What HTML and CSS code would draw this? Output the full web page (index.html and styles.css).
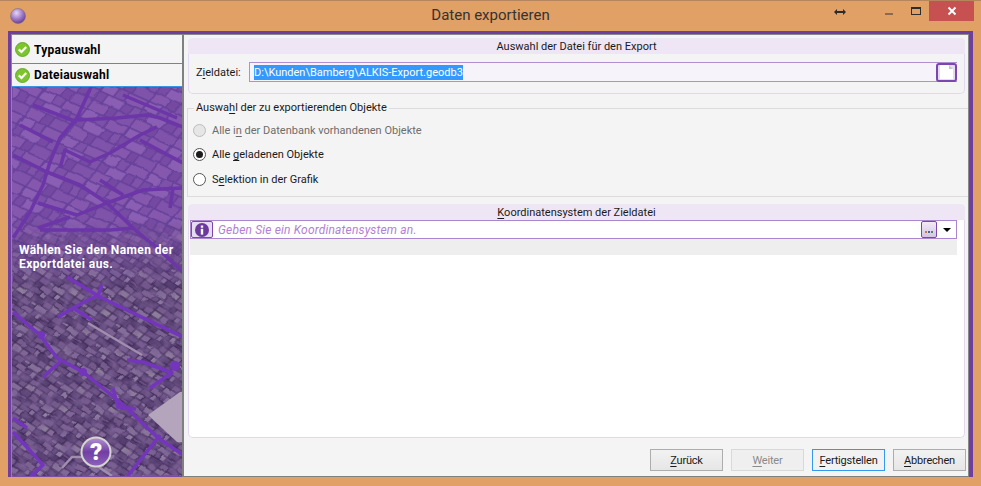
FILE: index.html
```html
<!DOCTYPE html>
<html lang="de">
<head>
    <meta charset="UTF-8">
    <title>Daten exportieren</title>
    <link rel="stylesheet" href="styles.css">
</head>
<body>
<div class="window">
    <div class="titlebar">
        <div class="title-left">
            <svg class="orb" width="18" height="18" viewBox="0 0 18 18">
                <defs>
                    <radialGradient id="orbFill" cx="0.4" cy="0.3" r="0.8">
                        <stop offset="0" stop-color="#e4d6f2"/>
                        <stop offset="0.55" stop-color="#9a72c4"/>
                        <stop offset="1" stop-color="#54307e"/>
                    </radialGradient>
                </defs>
                <circle cx="9" cy="9" r="7.5" fill="url(#orbFill)" stroke="#7d6a80" stroke-width="0.6"/>
            </svg>
        </div>
        <div class="title">Daten exportieren</div>
        <div class="title-right">
            <svg class="ctl-resize" width="12" height="8" viewBox="0 0 12 8"><path d="M0 4 L3 1 V3 H9 V1 L12 4 L9 7 V5 H3 V7 Z" fill="#2c2c2c"/></svg>
            <span class="ctl-min"></span>
            <span class="ctl-max"></span>
            <span class="ctl-close">
                <svg width="10" height="10" viewBox="0 0 10 10"><path d="M1.5 1.5 L8.5 8.5 M8.5 1.5 L1.5 8.5" stroke="#fff" stroke-width="2"/></svg>
            </span>
        </div>
    </div>

    <div class="frame">
        <div class="sidebar">
            <div class="step">
                <svg class="check" width="15" height="15" viewBox="0 0 15 15"><circle cx="7.5" cy="7.5" r="7" fill="#7cc52c" stroke="#5b9c1c" stroke-width="0.8"/><path d="M3.8 7.4 L6.5 10 L11.2 5" fill="none" stroke="#fff" stroke-width="2.2"/></svg>
                <span>Typauswahl</span>
            </div>
            <div class="step step-active">
                <svg class="check" width="15" height="15" viewBox="0 0 15 15"><circle cx="7.5" cy="7.5" r="7" fill="#7cc52c" stroke="#5b9c1c" stroke-width="0.8"/><path d="M3.8 7.4 L6.5 10 L11.2 5" fill="none" stroke="#fff" stroke-width="2.2"/></svg>
                <span>Dateiauswahl</span>
            </div>
            <div class="map">
                <svg class="map-art" width="170" height="389" viewBox="12 87 170 389">
                    <defs>
                        <pattern id="blocksTop" width="58" height="40" patternUnits="userSpaceOnUse" patternTransform="rotate(24) skewX(-14) scale(0.8)">
                            <rect width="58" height="40" fill="#66409a"/>
                            <rect x="1" y="1" width="16" height="11" fill="#8a5eb3"/>
                            <rect x="19" y="1" width="11" height="11" fill="#7d51a8"/>
                            <rect x="32" y="1" width="24" height="11" fill="#8558ae"/>
                            <rect x="1" y="14" width="9" height="11" fill="#784ca4"/>
                            <rect x="12" y="14" width="22" height="11" fill="#8a5eb3"/>
                            <rect x="36" y="14" width="10" height="11" fill="#774ba3"/>
                            <rect x="48" y="14" width="9" height="11" fill="#8053aa"/>
                            <rect x="1" y="27" width="20" height="12" fill="#8558ae"/>
                            <rect x="23" y="27" width="9" height="12" fill="#754aa1"/>
                            <rect x="34" y="27" width="23" height="12" fill="#7e52a9"/>
                        </pattern>
                        <pattern id="blocksLow" width="62" height="42" patternUnits="userSpaceOnUse" patternTransform="rotate(33) skewX(-12) scale(0.62)">
                            <rect width="62" height="42" fill="#3f2a58"/>
                            <rect x="1" y="1" width="14" height="9" fill="#6f5588"/>
                            <rect x="17" y="1" width="8" height="4" fill="#8d77a0"/>
                            <rect x="17" y="6" width="8" height="4" fill="#5a4375"/>
                            <rect x="27" y="1" width="18" height="9" fill="#85709a"/>
                            <rect x="47" y="1" width="14" height="9" fill="#5f4679"/>
                            <rect x="1" y="12" width="8" height="8" fill="#553e70"/>
                            <rect x="11" y="12" width="17" height="8" fill="#7c6292"/>
                            <rect x="30" y="12" width="6" height="8" fill="#634a7e"/>
                            <rect x="38" y="12" width="7" height="8" fill="#927fa3"/>
                            <rect x="47" y="12" width="14" height="3" fill="#6e5488"/>
                            <rect x="47" y="17" width="14" height="3" fill="#513a6c"/>
                            <rect x="1" y="22" width="16" height="8" fill="#674e81"/>
                            <rect x="19" y="22" width="7" height="8" fill="#86709c"/>
                            <rect x="28" y="22" width="17" height="8" fill="#543d6f"/>
                            <rect x="47" y="22" width="14" height="8" fill="#755b8d"/>
                            <rect x="1" y="32" width="10" height="9" fill="#836b99"/>
                            <rect x="13" y="32" width="19" height="9" fill="#5a4274"/>
                            <rect x="34" y="32" width="11" height="9" fill="#725889"/>
                            <rect x="47" y="32" width="14" height="9" fill="#8e7b9b"/>
                        </pattern>
                        <linearGradient id="fadeIn" x1="0" y1="0" x2="0" y2="1">
                            <stop offset="0.34" stop-color="#000"/>
                            <stop offset="0.52" stop-color="#fff"/>
                        </linearGradient>
                        <mask id="lowMask" maskUnits="userSpaceOnUse" x="12" y="87" width="170" height="389">
                            <rect x="12" y="87" width="170" height="389" fill="url(#fadeIn)"/>
                        </mask>
                        <filter id="rough" x="0" y="0" width="1" height="1">
                            <feTurbulence type="fractalNoise" baseFrequency="0.06" numOctaves="2" seed="7"/>
                            <feDisplacementMap in="SourceGraphic" scale="4" xChannelSelector="R" yChannelSelector="G"/>
                        </filter>
                        <filter id="grain" x="0" y="0" width="1" height="1">
                            <feTurbulence type="fractalNoise" baseFrequency="0.11" numOctaves="2" seed="3"/>
                            <feColorMatrix values="0 0 0 0 0.2  0 0 0 0 0.12  0 0 0 0 0.3  1.8 0 0 0 -0.6"/>
                        </filter>
                    </defs>
                    <rect x="12" y="87" width="170" height="389" fill="#7b4ea6"/>
                    <rect x="12" y="87" width="170" height="389" fill="url(#blocksTop)" filter="url(#rough)"/>
                    <rect x="12" y="87" width="170" height="389" fill="url(#blocksLow)" filter="url(#rough)" mask="url(#lowMask)"/>
                    <rect x="12" y="87" width="170" height="389" filter="url(#grain)" mask="url(#lowMask)"/>
                    <path class="pale" d="M148 415 L180 392 H182 V442 H177 Z"/>
                    <path class="pale-road" d="M88 323 L142 355"/>
                    <path class="pale-road" d="M62 468 L72 457 H84 L112 476"/>
                    <g class="road road-top">
                        <path d="M92 85 L77 118 L60 138 L50 162 L43 185 L30 212 L13 238"/>
                        <path d="M13 155 L47 172 L80 185 L107 203 L133 228 L157 248 L183 272"/>
                        <path d="M33 105 L77 122"/>
                        <path d="M78 120 L117 118 L147 115 L160 118 L183 127"/>
                        <path d="M60 168 L65 150 L90 162 L110 153 L140 135 L157 127"/>
                        <path d="M140 140 L183 163"/>
                        <path d="M107 203 L143 190 L183 188"/>
                        <path d="M173 188 L170 208"/>
                        <path d="M100 180 L123 195"/>
                        <path d="M38 203 L77 215 L107 203"/>
                        <path d="M38 228 L70 217"/>
                        <path d="M40 230 L110 230 L133 228"/>
                        <path d="M20 125 L53 142"/>
                        <path d="M123 95 L177 118"/>
                    </g>
                    <g class="road">
                        <path d="M67 277 L100 297 L183 337"/>
                        <path d="M102 285 L97 298"/>
                        <path d="M58 317 L73 308 L98 295"/>
                        <path d="M73 308 L92 320"/>
                        <path d="M13 312 L40 335 L57 358 L83 372 L120 402 L157 437 L183 455"/>
                        <path d="M43 377 L60 362"/>
                        <path d="M127 360 L143 362 L173 373"/>
                        <path d="M150 388 L173 372"/>
                        <path d="M113 388 L118 407 L136 409"/>
                        <path d="M160 435 L127 477"/>
                        <path d="M13 432 L43 465 L30 477"/>
                        <path d="M13 418 L27 428"/>
                        <circle cx="175" cy="366" r="5"/>
                        <circle cx="41" cy="335" r="4"/>
                        <circle cx="83" cy="372" r="4"/>
                    </g>
                </svg>
                <p class="map-text">Wählen Sie den Namen der Exportdatei aus.</p>
                <svg class="help" width="32" height="32" viewBox="0 0 32 32">
                    <defs>
                        <linearGradient id="helpFill" x1="0" y1="0" x2="0" y2="1">
                            <stop offset="0" stop-color="#b594d3"/>
                            <stop offset="0.5" stop-color="#6f3fa3"/>
                            <stop offset="1" stop-color="#8f62bc"/>
                        </linearGradient>
                    </defs>
                    <circle cx="16" cy="16" r="14.5" fill="url(#helpFill)" stroke="#d5d5cf" stroke-width="2"/>
                    <text x="16" y="24" class="help-mark">?</text>
                </svg>
            </div>
        </div>

        <div class="content">
            <section class="panel panel-file">
                <h3 class="panel-head">Auswahl der Datei für den Export</h3>
                <div class="file-row">
                    <label class="file-label">Z<u>i</u>eldatei:</label>
                    <div class="file-input">
                        <span class="selected">D:\Kunden\Bamberg\ALKIS-Export.geodb3</span>
                        <span class="file-btn">
                            <svg width="13" height="14" viewBox="0 0 13 14"><path d="M0 0 H9 L13 4 V14 H0 Z" fill="#fff"/><path d="M9 0 L13 4 H9 Z" fill="#c8c4cc"/></svg>
                        </span>
                    </div>
                </div>
            </section>

            <fieldset class="group">
                <legend>Auswa<u>h</u>l der zu exportierenden Objekte</legend>
                <div class="radio radio-off"><span class="dot"></span><span>Alle i<u>n</u> der Datenbank vorhandenen Objekte</span></div>
                <div class="radio"><span class="dot dot-on"></span><span>Alle <u>g</u>eladenen Objekte</span></div>
                <div class="radio"><span class="dot"></span><span>S<u>e</u>lektion in der Grafik</span></div>
            </fieldset>

            <section class="panel panel-crs">
                <h3 class="panel-head"><u>K</u>oordinatensystem der Zieldatei</h3>
                <div class="crs-row">
                    <span class="info-btn">
                        <svg width="14" height="14" viewBox="0 0 14 14"><circle cx="7" cy="7" r="7" fill="#6b3a9c"/><rect x="5.8" y="2.5" width="2.4" height="2.2" fill="#fff"/><rect x="5.8" y="5.8" width="2.4" height="5.8" fill="#fff"/></svg>
                    </span>
                    <span class="crs-hint">Geben Sie ein Koordinatensystem an.</span>
                    <span class="dots-btn"><i class="dot-a"></i><i class="dot-b"></i><i class="dot-c"></i></span>
                    <span class="drop-arrow"></span>
                </div>
                <div class="crs-strip"></div>
            </section>

            <div class="actions">
                <button class="btn"><u>Z</u>urück</button>
                <button class="btn btn-off"><u>W</u>eiter</button>
                <button class="btn btn-default"><u>F</u>ertigstellen</button>
                <button class="btn"><u>A</u>bbrechen</button>
            </div>
        </div>
    </div>
</div>
</body>
</html>
```

FILE: styles.css
```css
* {
    box-sizing: border-box;
}
html, body {
    margin: 0;
    height: 100%;
    overflow: hidden;
}
body {
    font-family: Roboto, "Liberation Sans", sans-serif;
    font-size: 11px;
    color: #1a1a1a;
    background: #e0a066;
}
u {
    text-decoration-thickness: 1px;
    text-underline-offset: 2px;
}

.window {
    width: 981px;
    height: 486px;
    display: flex;
    flex-direction: column;
    background: #e0a066;
    border-top: 1px solid #b5855c;
}

/* title bar */
.titlebar {
    height: 30px;
    display: grid;
    grid-template-columns: 1fr auto 1fr;
    align-items: start;
}
.title-left {
    padding: 6px 0 0 9px;
}
.orb {
    display: block;
}
.title {
    font-size: 15px;
    line-height: 29px;
    color: #333;
}
.title-right {
    display: flex;
    justify-content: flex-end;
    align-items: flex-start;
    padding-right: 7px;
}
.ctl-resize {
    margin: 7px 39px 0 0;
}
.ctl-min {
    width: 8px;
    height: 2px;
    margin: 12px 18px 0 0;
    background: #8e6a4a;
}
.ctl-max {
    width: 10px;
    height: 8px;
    margin: 6px 8px 0 0;
    border: 1px solid #2c2c2c;
    border-top-width: 2px;
}
.ctl-close {
    width: 45px;
    height: 20px;
    background: #c75050;
    display: flex;
    align-items: center;
    justify-content: center;
}

/* purple frame */
.frame {
    height: 446px;
    margin: 0 8px;
    display: flex;
    background: #6f3fa0;
    padding: 3px 4px 0 3px;
}
.sidebar {
    width: 173px;
    display: flex;
    flex-direction: column;
    padding-top: 1px;
    background: #f4f4f4;
    border: 1px solid #8a8a8a;
    border-right: 2px solid #808080;
    border-bottom: 0;
}
.step {
    height: 27px;
    display: flex;
    align-items: center;
    gap: 4px;
    padding-left: 3px;
    font-size: 12px;
    font-weight: 700;
    letter-spacing: 0.25px;
    color: #000;
}
.step-active {
    height: 24px;
    border-top: 1px solid #3a94e6;
    border-bottom: 1px solid #3a94e6;
}
.check {
    flex: none;
}

.map {
    position: relative;
    flex: 1;
    overflow: hidden;
    background: #7b4ea6;
}
.map-art {
    display: block;
}
.pale {
    fill: #b4a4bc;
}
.pale-road {
    fill: none;
    stroke: #a18eae;
    stroke-width: 2.5;
}
.road {
    fill: none;
    stroke: #7435bd;
    stroke-width: 3.5;
    stroke-linejoin: round;
}
.road circle {
    fill: #7435bd;
    stroke: none;
}
.road-top {
    stroke: #6c35a8;
    stroke-width: 3.5;
}
.map-text {
    position: absolute;
    left: 7px;
    top: 156px;
    width: 166px;
    margin: 0;
    font-size: 12px;
    font-weight: 700;
    line-height: 14px;
    letter-spacing: 0.4px;
    color: #fff;
}
.help {
    position: absolute;
    left: 68px;
    top: 349px;
}
.help-mark {
    font-family: Roboto, "Liberation Sans", sans-serif;
    font-size: 24px;
    font-weight: 900;
    text-anchor: middle;
    fill: #fff;
}

/* right side */
.content {
    flex: 1;
    display: flex;
    flex-direction: column;
    background: #f4f4f4;
    border-top: 1px solid #8a8a8a;
    border-right: 1px solid #8a8a8a;
    border-bottom: 1px solid #808080;
    padding: 3px 0 0 4px;
    min-width: 0;
}
.panel {
    margin-right: 3px;
    border: 1px solid #e4d8f0;
    border-top: 0;
    border-radius: 5px;
}
.panel-head {
    height: 16px;
    margin: 0 -1px;
    background: #efe6f5;
    border-radius: 5px 5px 0 0;
    font-size: 11px;
    font-weight: 400;
    line-height: 17px;
    text-align: center;
}
.panel-file {
    height: 56px;
}
.file-row {
    display: flex;
    align-items: center;
    padding: 8px 7px 0 7px;
}
.file-label {
    width: 53px;
}
.file-input {
    flex: 1;
    height: 20px;
    display: flex;
    align-items: center;
    justify-content: space-between;
    padding-left: 4px;
    background: #f6f3fa;
    border: 1px solid #b08fd0;
    border-width: 1px 0 1px 1px;
}
.selected {
    line-height: 15px;
    background: #3399ff;
    color: #fff;
}
.file-btn {
    width: 21px;
    height: 19px;
    display: flex;
    align-items: center;
    justify-content: center;
    background: #e6dcf0;
    border: 2px solid #7c46b0;
    border-radius: 3px;
}

.group {
    height: 96px;
    margin: 7px 0 0 -1px;
    padding: 3px 0 0 5px;
    border: 1px solid #dcdcdc;
    border-right: 0;
    min-width: 0;
}
.group legend {
    padding: 0 2px;
    margin-left: 1px;
    line-height: 14px;
}
.radio {
    height: 24.5px;
    display: flex;
    align-items: center;
    gap: 6px;
}
.radio-off {
    color: #6d6d6d;
}
.dot {
    width: 13px;
    height: 13px;
    border-radius: 50%;
    background: #fff;
    border: 1px solid #555;
    display: flex;
    align-items: center;
    justify-content: center;
}
.radio-off .dot {
    background: #e6e6e6;
    border-color: #bcbcbc;
}
.dot-on::after {
    content: "";
    width: 7px;
    height: 7px;
    border-radius: 50%;
    background: #1c1c1c;
}

.panel-crs {
    height: 234px;
    margin-top: 7px;
    background: #fff;
}
.crs-row {
    height: 19px;
    margin: 0 7px 0 1px;
    display: flex;
    align-items: center;
    background: #fff;
    border: 1px solid #ab86d0;
}
.info-btn {
    width: 22px;
    height: 17px;
    display: flex;
    align-items: center;
    justify-content: center;
    background: #e6dcf0;
    border: 1px solid #7c46b0;
    border-radius: 2px;
}
.crs-hint {
    flex: 1;
    padding-left: 5px;
    font-size: 12px;
    font-style: italic;
    letter-spacing: 0.17px;
    color: #b27fd6;
}
.dots-btn {
    width: 16px;
    height: 17px;
    padding-top: 9px;
    display: flex;
    justify-content: center;
    gap: 1px;
    background: linear-gradient(#f1eaf6, #d5c4e6);
    border: 1px solid #7c46b0;
    border-radius: 2px;
}
.dots-btn i {
    width: 2px;
    height: 2px;
}
.dot-a {
    background: #c87a3a;
}
.dot-b {
    background: #3a6aa8;
}
.dot-c {
    background: #4a8a6a;
}
.drop-arrow {
    width: 19px;
    display: flex;
    justify-content: center;
}
.drop-arrow::after {
    content: "";
    border: 4px solid transparent;
    border-top: 4px solid #000;
    border-bottom: 0;
}
.crs-strip {
    height: 16px;
    margin: 0 7px 0 1px;
    background: #eeeeee;
}

.actions {
    display: flex;
    justify-content: flex-end;
    gap: 8px;
    margin-top: 11px;
    padding-right: 2px;
}
.btn {
    width: 73px;
    height: 22px;
    padding: 0;
    font: inherit;
    letter-spacing: -0.2px;
    color: #1a1a1a;
    background: linear-gradient(#f2f2f2, #e6e6e6);
    border: 1px solid #adadad;
}
.btn-off {
    color: #8a8a8a;
    background: #efefef;
    border-color: #d9d9d9;
}
.btn-default {
    border-color: #3399ee;
    background: #f2f2f2;
}
```
